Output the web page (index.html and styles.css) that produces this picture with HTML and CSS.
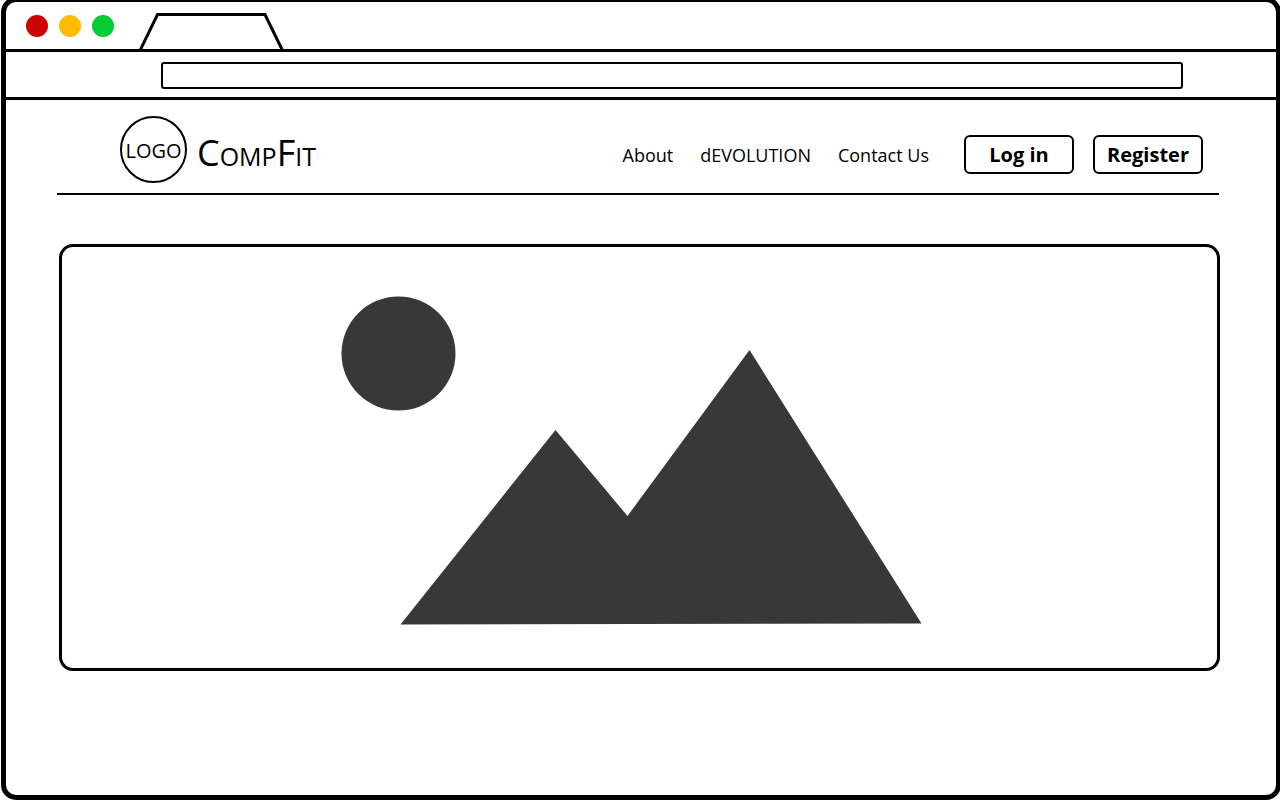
FILE: index.html
```html
<!DOCTYPE html>
<html lang="en">
<head>
<meta charset="utf-8">
<title>CompFit</title>
<link rel="stylesheet" href="styles.css">
</head>
<body>
<div class="browser">
  <div class="tab-strip">
    <span class="dot dot-red"></span>
    <span class="dot dot-yellow"></span>
    <span class="dot dot-green"></span>
    <svg class="tab" width="146" height="37" viewBox="0 0 146 37" aria-hidden="true">
      <path d="M1 37.500L18.500 1.500H126L143.500 37.500" fill="none" stroke="#000" stroke-width="3"/>
    </svg>
  </div>
  <div class="toolbar">
    <input class="address" type="text" aria-label="Address">
  </div>
  <header class="site-header">
    <div class="logo">LOGO</div>
    <div class="brand">CompFit</div>
    <nav class="nav">
      <a href="#">About</a>
      <a href="#">dEVOLUTION</a>
      <a href="#">Contact Us</a>
    </nav>
    <button class="button" type="button">Log in</button>
    <button class="button" type="button">Register</button>
  </header>
  <main class="hero">
    <svg width="581" height="329" viewBox="0 0 581 329" role="img" aria-label="Image placeholder">
      <circle cx="57.500" cy="57.500" r="57" fill="#383838"/>
      <path d="M59.500 328.500L214.500 134L286.500 220L408.500 54L580.500 327.500Z" fill="#383838"/>
    </svg>
  </main>
</div>
</body>
</html>
```

FILE: styles.css
```css
* { box-sizing: border-box; }

body {
  margin: 0;
  overflow: hidden;
  background: #fff;
  color: #000;
  font-family: "Open Sans", "Noto Sans", sans-serif;
}

.browser {
  min-height: calc(100vh + 3px);
  margin: -3px -1px 0 1px;
  border: 5px solid #000;
  border-radius: 15px;
}

.tab-strip {
  display: flex;
  gap: 11px;
  height: 50px;
  padding: 11px 20px 0;
  border-bottom: 3px solid #000;
}

.dot {
  width: 22px;
  height: 22px;
  margin-top: 2px;
  border-radius: 50%;
}

.dot-red { background: #c00; }
.dot-yellow { background: #fb0; }
.dot-green { background: #0c3; }

.tab { margin-left: 14px; }

.toolbar {
  height: 48px;
  padding: 10px 93px 0 155px;
  border-bottom: 3px solid #000;
}

.address {
  display: block;
  width: 100%;
  height: 27px;
  padding: 0 8px;
  border: 2px solid #000;
  border-radius: 3px;
  background: #fff;
  font: inherit;
  font-size: 14px;
}

.site-header {
  display: flex;
  align-items: flex-start;
  margin: 0 57px 0 51px;
  padding: 16px 16px 10px 63px;
  border-bottom: 2px solid #000;
}

.logo {
  width: 67px;
  height: 67px;
  border: 2px solid #000;
  border-radius: 50%;
  font-size: 20px;
  line-height: 66px;
  text-align: center;
}

.brand {
  height: 67px;
  margin-left: 10px;
  font-size: 36px;
  font-variant-caps: small-caps;
  line-height: 74px;
}

.nav {
  display: flex;
  gap: 27px;
  margin: 24px 35px 0 auto;
  font-size: 18px;
  line-height: 30px;
}

.nav a {
  color: inherit;
  text-decoration: none;
}

.button {
  width: 110px;
  height: 39px;
  margin-top: 19px;
  padding: 0;
  border: 2px solid #000;
  border-radius: 6px;
  background: #fff;
  color: #000;
  font: bold 20px "Open Sans", "Noto Sans", sans-serif;
}

.button + .button { margin-left: 19px; }

.hero {
  display: flex;
  justify-content: center;
  margin: 49px 56px 0 53px;
  padding: 49px 16px 43px 0;
  border: 3px solid #000;
  border-radius: 14px;
}
```
